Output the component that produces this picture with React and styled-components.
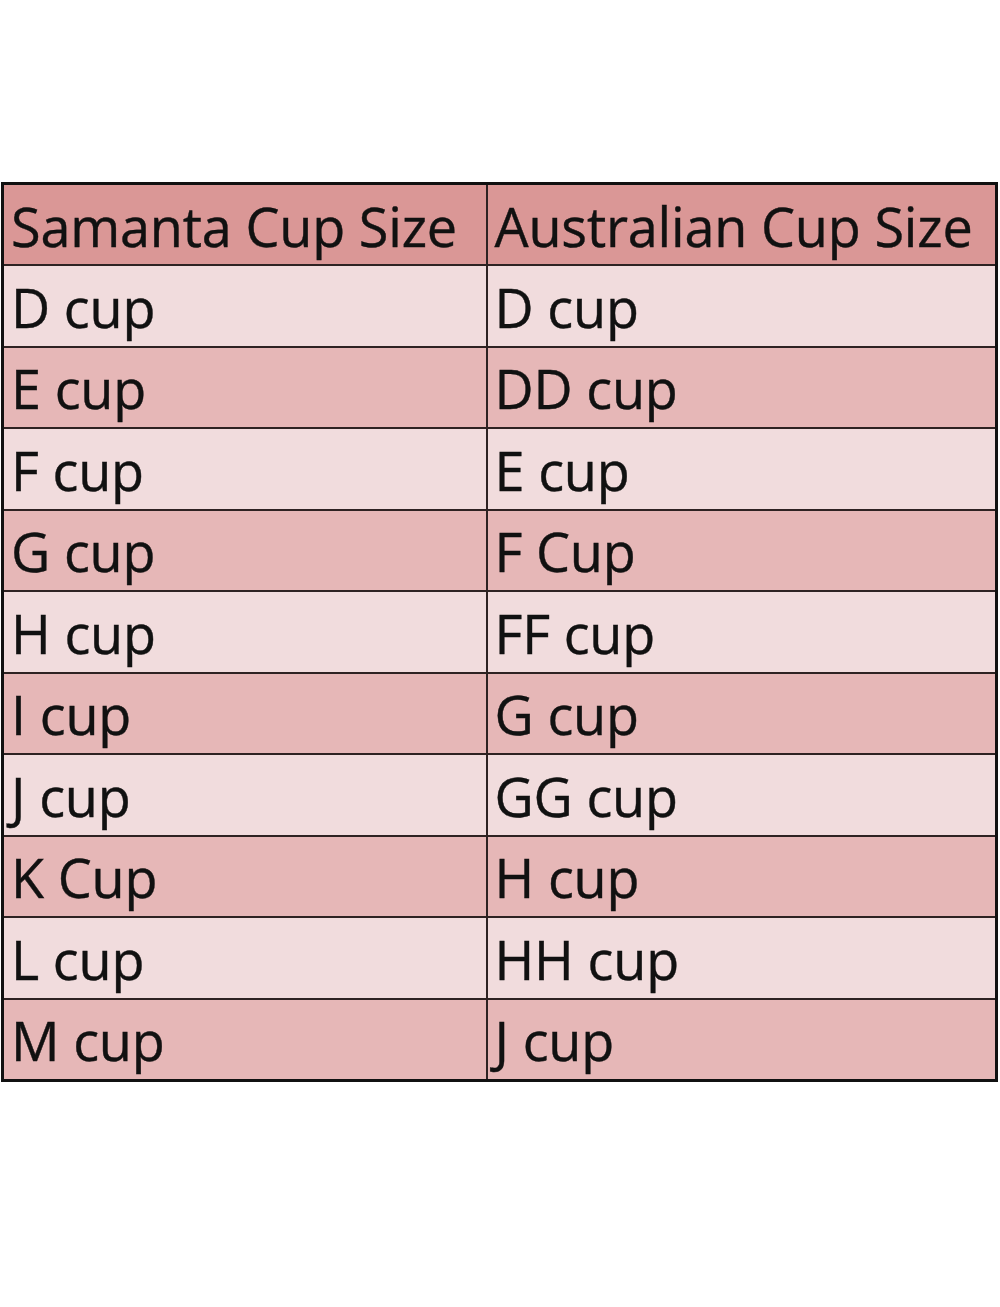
import React from "react";
import styled, { createGlobalStyle } from "styled-components";

const GlobalStyle = createGlobalStyle`
  html, body {
    margin: 0;
    padding: 0;
    background: #ffffff;
  }
`;

const rows = [
  ["D cup", "D cup"],
  ["E cup", "DD cup"],
  ["F cup", "E cup"],
  ["G cup", "F Cup"],
  ["H cup", "FF cup"],
  ["I cup", "G cup"],
  ["J cup", "GG cup"],
  ["K Cup", "H cup"],
  ["L cup", "HH cup"],
  ["M cup", "J cup"],
];

const Page = styled.div`
  width: 1000px;
  height: 1307px;
  padding-top: 182px;
  box-sizing: border-box;
`;

const Table = styled.table`
  margin-left: 1px;
  width: 997px;
  border-collapse: collapse;
  border: 3px solid #111;
  font-family: "Open Sans", "Noto Sans", sans-serif;
  font-size: 54px;
  color: #111;
  table-layout: fixed;
`;

const Row = styled.tr`
  height: 81.5px;
  background: ${(p) => p.bg};
`;

const Cell = styled.td`
  border: 2px solid #2e2222;
  padding: 2px 0 0 7px;
  line-height: 1;
  white-space: nowrap;
  vertical-align: middle;
  letter-spacing: -0.2px;
  -webkit-text-stroke: 0.4px #111;
`;

const bgFor = (i) => (i % 2 === 0 ? "#f1dcdd" : "#e6b7b7");

const App = () => {
  return (
    <Page>
      <GlobalStyle />
      <Table>
        <colgroup>
          <col style={{ width: 484 }} />
          <col />
        </colgroup>
        <tbody>
          <Row bg="#da9796">
            <Cell>Samanta Cup Size</Cell>
            <Cell>Australian Cup Size</Cell>
          </Row>
          {rows.map((r, i) => (
            <Row key={i} bg={bgFor(i)}>
              <Cell>{r[0]}</Cell>
              <Cell>{r[1]}</Cell>
            </Row>
          ))}
        </tbody>
      </Table>
    </Page>
  );
};

export default App;
